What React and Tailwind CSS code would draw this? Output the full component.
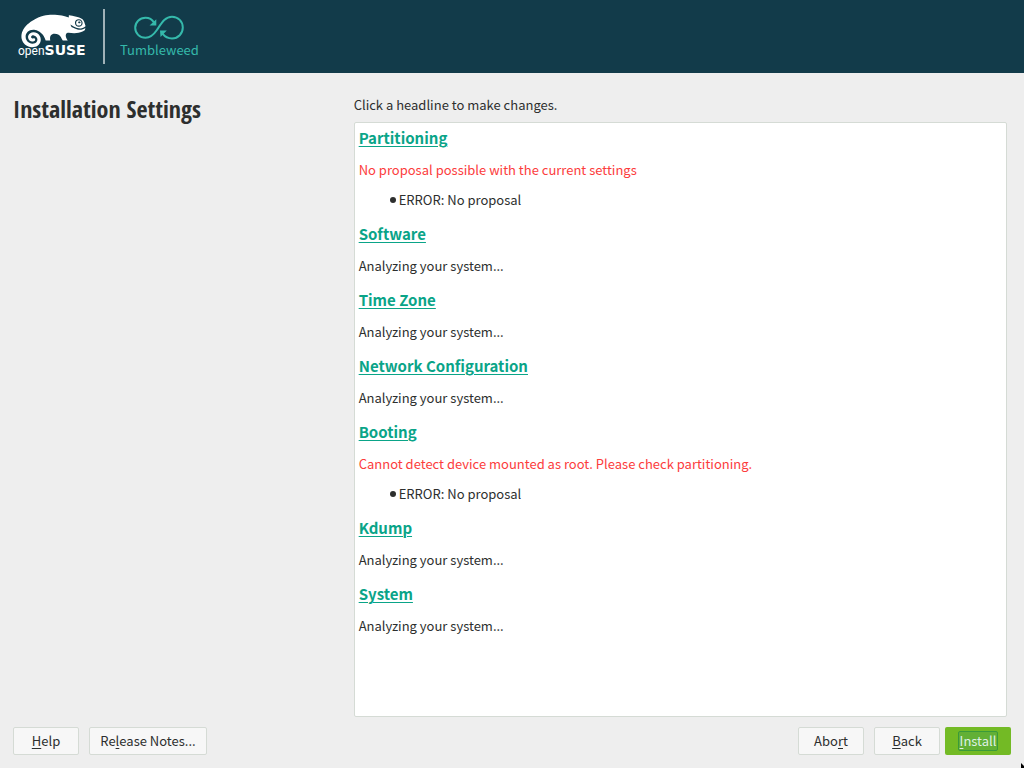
import { FaSuse } from "react-icons/fa";

const ANALYZING = "Analyzing your system...";

const sections = [
  {
    title: "Partitioning",
    text: "No proposal possible with the current settings",
    error: true,
    items: ["ERROR: No proposal"],
  },
  { title: "Software", text: ANALYZING },
  { title: "Time Zone", text: ANALYZING },
  { title: "Network Configuration", text: ANALYZING },
  {
    title: "Booting",
    text: "Cannot detect device mounted as root. Please check partitioning.",
    error: true,
    items: ["ERROR: No proposal"],
  },
  { title: "Kdump", text: ANALYZING },
  { title: "System", text: ANALYZING },
];

function Mnemonic({ label, at }) {
  return (
    <span>
      {label.slice(0, at)}
      <span className="underline decoration-1 underline-offset-2">{label[at]}</span>
      {label.slice(at + 1)}
    </span>
  );
}

function Button({ label, at, wide }) {
  return (
    <button
      type="button"
      className={
        "flex h-7 items-center justify-center rounded-[2px] border border-[#d5dbd5] bg-[#f7f7f7] leading-5 " +
        (wide ? "w-[118px]" : "w-[66px]")
      }
    >
      <Mnemonic label={label} at={at} />
    </button>
  );
}

function TumbleweedMark() {
  return (
    <svg className="h-[25px] w-[50px]" viewBox="0 0 50 25" fill="none" aria-hidden="true">
      <path
        stroke="#35b9ab"
        strokeWidth="2"
        d="M20 7.500C18.200 4.400 15.200 2.700 11.500 2.700 5.600 2.700 1.200 7.300 1.200 12.800S5.600 22.800 11.500 22.800c4.700 0 8-2.800 11.200-7.500C27.500 8.200 31 1.700 38 1.700c6.300 0 10.800 4.900 10.800 10.900S44.300 23.500 38 23.500c-3.900 0-7.200-1.800-9.500-4.800"
      />
      <path fill="#35b9ab" d="M22.300 4.200v6.300h-6.800zM26 15.600h6.800l-6.300 6.300z" />
    </svg>
  );
}

function Header() {
  return (
    <header className="flex h-[73px] shrink-0 items-start bg-[#123b4a] pl-[18px] pt-[9px]">
      <div className="relative h-[55px] w-[70px]">
        <FaSuse className="absolute -top-1 left-[3px] h-[52px] w-[65px] text-white" aria-hidden="true" />
        <div className="absolute left-0 top-[33px] flex items-baseline leading-4 text-white">
          <span className="font-['Roboto',sans-serif] text-[12px]">open</span>
          <span className="font-['DejaVu_Sans',sans-serif] text-[14px] font-bold">SUSE</span>
        </div>
      </div>
      <div className="ml-[15px] h-[55px] w-[2px] bg-[#a0b1b7]" />
      <div className="ml-[15px] flex flex-col items-center pt-[6px]">
        <TumbleweedMark />
        <span className="text-[13px] leading-5 text-[#35b9ab]">Tumbleweed</span>
      </div>
    </header>
  );
}

export default function App() {
  return (
    <div className="relative flex min-h-screen flex-col overflow-hidden bg-[#eeeeee] font-['Noto_Sans_CJK_SC',sans-serif] text-[13px] text-[#2d2f2e]">
      <Header />
      <main className="grid grow grid-cols-[1fr_2fr] gap-[14px] pl-[13px] pr-[17px] pt-[22px]">
        <h1 className="font-['Open_Sans_Condensed','Noto_Sans_Condensed','Liberation_Sans_Narrow',sans-serif] text-[24px] font-bold leading-7">
          Installation Settings
        </h1>
        <div className="flex flex-col">
          <p className="leading-5">Click a headline to make changes.</p>
          <div className="mt-[7px] flex grow flex-col gap-[14px] rounded-[2px] border border-[#d5dbd5] bg-white px-1 py-[5px]">
            {sections.map((s) => (
              <section key={s.title}>
                <h2 className="text-[15px] font-bold leading-5">
                  <a href="#" className="text-[#0aa488] underline decoration-1 underline-offset-2">
                    {s.title}
                  </a>
                </h2>
                <p className={"mt-3 leading-5 " + (s.error ? "text-[#fc3c3c]" : "")}>{s.text}</p>
                {s.items && (
                  <ul className="mt-[10px] pl-[31px]">
                    {s.items.map((item) => (
                      <li key={item} className="flex items-center gap-[3px] leading-5">
                        <span className="size-[6px] rounded-full bg-[#2d2f2e]" />
                        {item}
                      </li>
                    ))}
                  </ul>
                )}
              </section>
            ))}
          </div>
        </div>
      </main>
      <footer className="flex shrink-0 items-center justify-between pb-[13px] pl-[13px] pr-[13px] pt-[10px]">
        <div className="flex gap-[10px]">
          <Button label="Help" at={0} />
          <Button label="Release Notes..." at={2} wide />
        </div>
        <div className="flex">
          <div className="mr-[5px] flex gap-[10px]">
            <Button label="Abort" at={3} />
            <Button label="Back" at={0} />
          </div>
          <button
            type="button"
            className="flex h-7 w-[66px] items-center justify-center rounded-[2px] bg-[#73ba25] leading-5 text-[#dff0e4]"
          >
            <span className="flex h-5 items-center rounded-[2px] border border-[#3a9a3a] bg-[#62b035] px-px">
              <Mnemonic label="Install" at={0} />
            </span>
          </button>
        </div>
      </footer>
      <svg className="absolute bottom-0 right-0 h-[5px] w-[3px]" viewBox="0 0 3 5" aria-hidden="true">
        <path d="M0 0l3 3v2H0z" fill="#000" />
      </svg>
    </div>
  );
}
